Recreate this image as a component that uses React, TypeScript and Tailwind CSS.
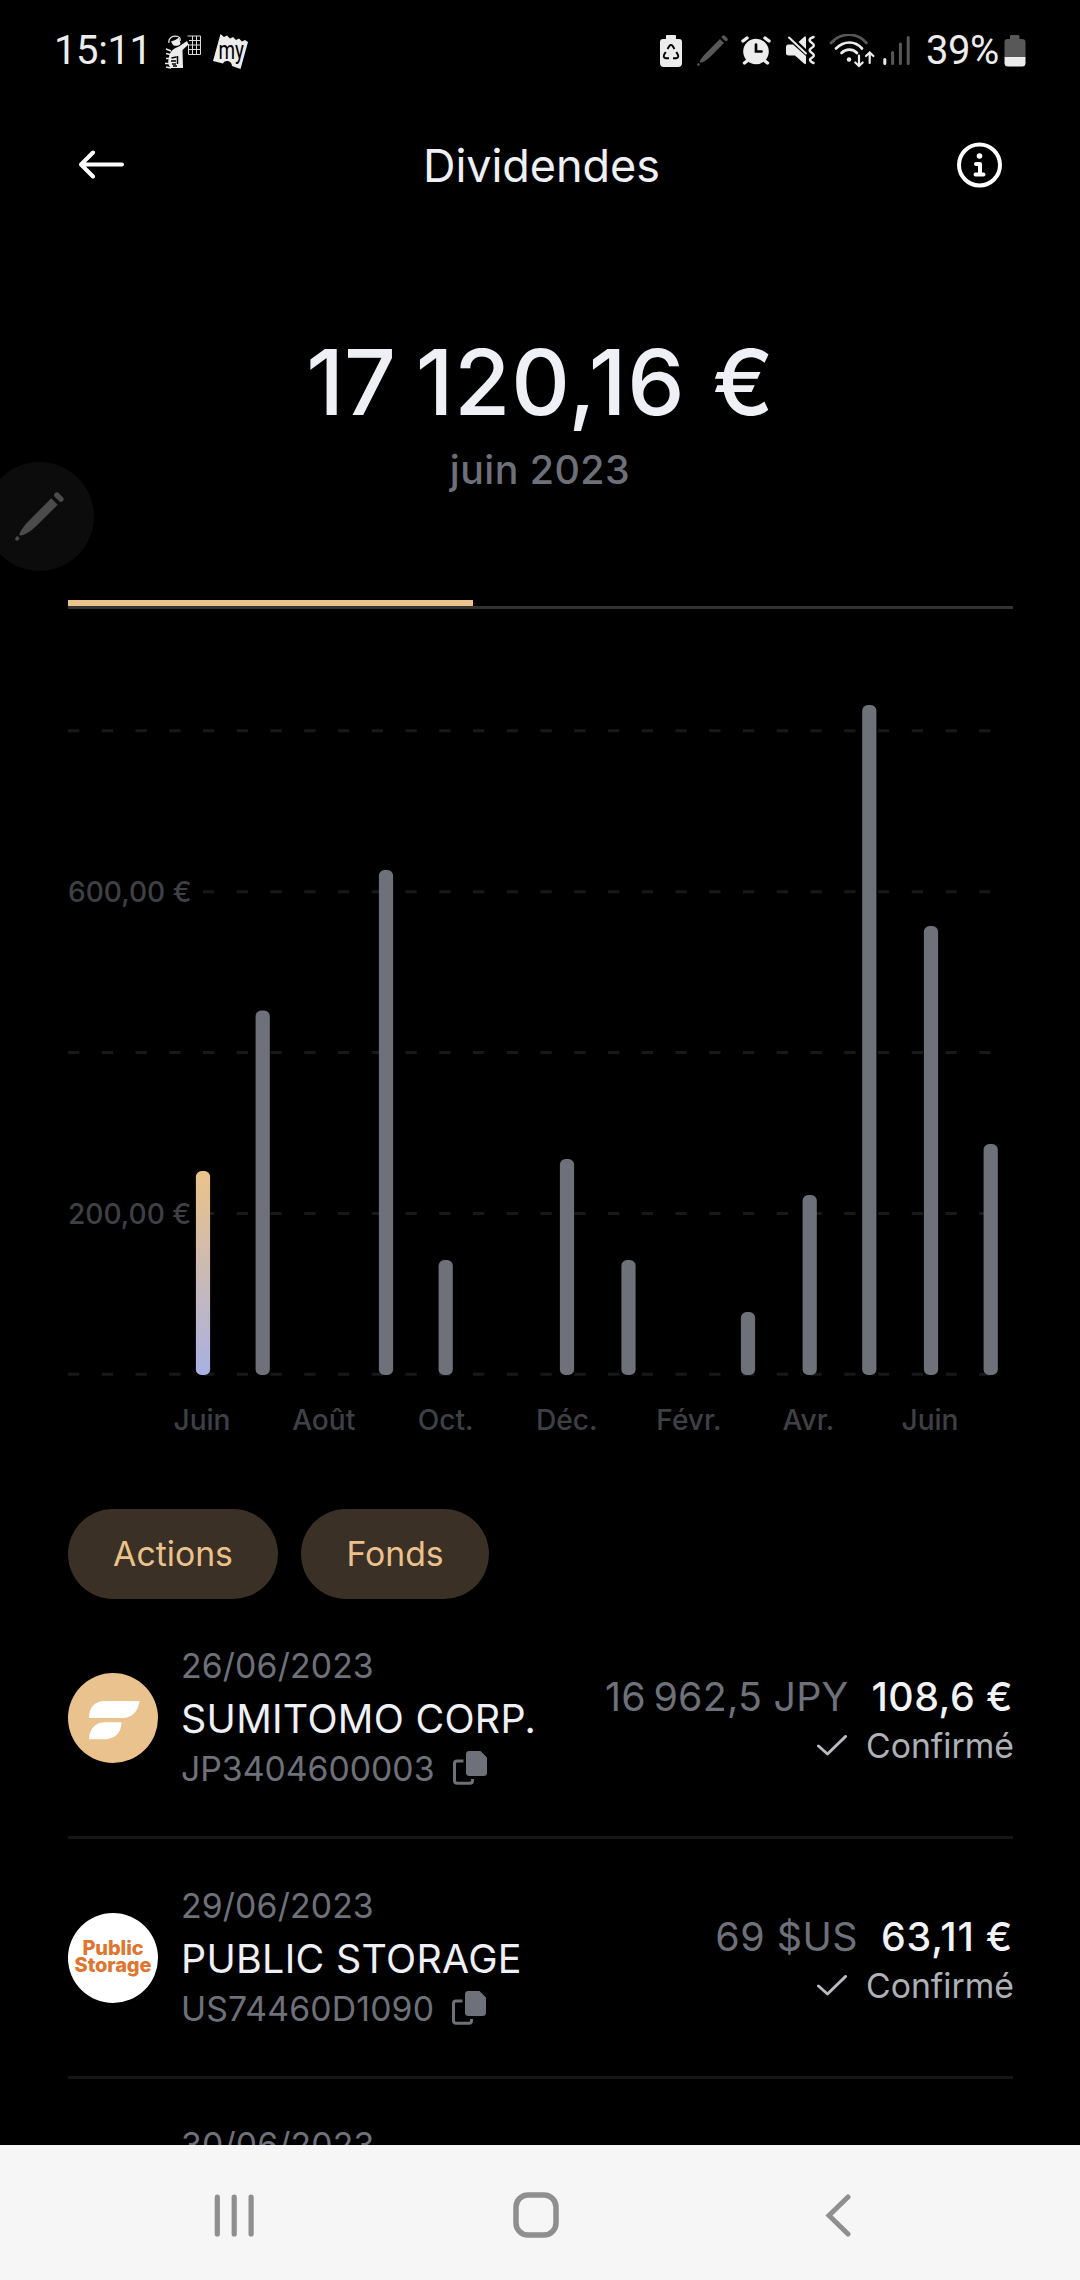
import type { ReactNode } from "react";

const BARS = [
  { x: 135, top: 468 },
  { x: 194.7, top: 307.6 },
  { x: 318, top: 167 },
  { x: 377.7, top: 557 },
  { x: 499, top: 456 },
  { x: 560.5, top: 557 },
  { x: 680, top: 609 },
  { x: 741.7, top: 492 },
  { x: 801.3, top: 2 },
  { x: 863, top: 223 },
  { x: 922.7, top: 441 },
];

const MONTHS = [
  { label: "Juin", x: 134 },
  { label: "Août", x: 255.7 },
  { label: "Oct.", x: 377.7 },
  { label: "Déc.", x: 498.7 },
  { label: "Févr.", x: 621 },
  { label: "Avr.", x: 740.5 },
  { label: "Juin", x: 862 },
];

const GRID = [27.7, 188.7, 349.5, 510.5, 671.3];

function Chart() {
  return (
    <svg width="945" height="740" viewBox="0 0 945 740" className="block overflow-visible font-['Inter',sans-serif]">
      <defs>
        <linearGradient id="current" x1="0" y1="0" x2="0" y2="1">
          <stop offset="0" stopColor="#ebc28a" />
          <stop offset="0.15" stopColor="#e2c095" />
          <stop offset="1" stopColor="#a8b1e3" />
        </linearGradient>
      </defs>
      {GRID.map((y) => (
        <line key={y} x1="0" x2="945" y1={y} y2={y} stroke="#17181a" strokeWidth="3" strokeDasharray="11.25 22.5" />
      ))}
      <rect x="0" y="170" width="124" height="36" fill="#000" />
      <rect x="0" y="492" width="124" height="36" fill="#000" />
      <text x="0" y="199" fontSize="28.1" fontWeight="500" fill="#3f4046">600,00 €</text>
      <text x="0" y="521" fontSize="28.1" fontWeight="500" fill="#3f4046">200,00 €</text>
      {BARS.map((b, i) => (
        <rect key={b.x} x={b.x - 7.1} y={b.top} width="14.2" height={672 - b.top} rx="5.6" fill={i === 0 ? "url(#current)" : "#6e7179"} />
      ))}
      {MONTHS.map((m) => (
        <text key={m.x} x={m.x} y="726.8" textAnchor="middle" fontSize="28.1" fontWeight="500" fill="#3f4046">
          {m.label}
        </text>
      ))}
    </svg>
  );
}

function Pen({ size, className }: { size: number; className: string }) {
  return (
    <svg width={size} height={size} viewBox="0 0 50 50" className={className} fill="currentColor">
      <path d="M37 6.5 L43.5 13 L22 34.5 C16 40.5 9 44.5 6 44.5 C4.500 44.500 4 43.500 5 41.500 C6.500 38 10 33.500 15 28.500 Z" />
      <path d="M40.5 1.500 C42 0 43.500 0 45 1.500 L48.800 5.300 C50 6.500 50 8 48.800 9.300 C47.500 10.500 46.300 10.500 45 9.300 L40.500 4.800 C39.500 3.700 39.500 2.500 40.500 1.500 Z" />
      <path d="M2.500 45 L4.800 47.300 L3.500 49 C2.500 50 1.500 50 .700 49.300 C0 48.500 0 47.500 .700 46.500 Z" />
    </svg>
  );
}

function StatusBar() {
  return (
    <div className="flex h-[100px] items-start pl-[54px] pr-[54px] pt-[26px] font-['Roboto',sans-serif] text-[40px] leading-[48px] text-[#ececec]">
      <span className="mt-px w-[111px] tracking-[-0.4px]">15:11</span>
      <svg width="36" height="34" viewBox="0 0 36 34" className="mt-[9px]">
        <path d="M4 8 C3 3 8 0 13 1.500 C15 2 15.500 4 15 6" fill="none" stroke="#ececec" strokeWidth="1.200" />
        <path d="M6 6.500 C9 5.500 13 4 14 2 L15.500 9 C14 11 10 11.500 8 10 Z" fill="#ececec" />
        <path d="M4 22 C5 16 9 13 14 11.500 L22 6 L23.500 9.500 L17.500 15 L18 33 H6 C2.500 30 3 26 4 22 Z" fill="#ececec" />
        <path d="M1 14 l5 2 M1 18.500 l4 1 M1 23.500 l3 0 M0 28.500 l4 0 M1 32 l5 1" stroke="#ececec" strokeWidth="1.500" />
        <path d="M6.500 23 l5 -1 M6 26 h5 M7 29 h4 M12.500 21 v8 M8 31 h4" stroke="#000" strokeWidth="1.500" />
        <path d="M22.500 1 H35.500 V19.500 H23.500 V9 M24 5.500 H35 M24 10 H35 M24 14.500 H35 M27.500 1 V20 M31.500 1 V20" fill="none" stroke="#d8d8d8" strokeWidth="1" />
      </svg>
      <svg width="36" height="36" viewBox="0 0 36 36" className="ml-[12px] mt-[8px]">
        <path d="M7.500 0 L11 3 L14 1.500 L17 4.500 L20 3 L23 6 L26 4.500 L29 7.500 L32 6 L35 8 L27.500 35 L19 32 C19 27 12 25 10 29.500 L0 27 Z" fill="#ececec" />
        <text x="5.500" y="24.500" fontSize="26" fontWeight="400" fill="#000" textLength="25.500" lengthAdjust="spacingAndGlyphs">my</text>
      </svg>
      <div className="grow" />
      <svg width="22" height="32" viewBox="0 0 22 32" className="mt-[9px]">
        <path d="M7 0 H15 Q16 0 16 1 V4 H19 Q22 4 22 7 V28 Q22 32 18 32 H4 Q0 32 0 28 V7 Q0 4 3 4 H6 V1 Q6 0 7 0 Z" fill="#ececec" />
        <path d="M7.500 14 L9.500 10.800 Q11 9 12.500 10.800 L14.500 14 M16.300 17 L18 20 Q19 23 16 23.300 H13 M9 23.300 H6 Q3 23 4 20 L5.700 17" fill="none" stroke="#000" strokeWidth="1.900" />
      </svg>
      <Pen size={31} className="ml-[15px] mt-[9px] text-[#585858]" />
      <svg width="30" height="30" viewBox="0 0 30 30" className="ml-[13px] mt-[10px]">
        <circle cx="15" cy="15.500" r="12.800" fill="#ececec" />
        <path d="M2 5 L6 2 M24 2 L28 5 M6 25 L3.500 27 M24 25 L26.500 27" stroke="#ececec" strokeWidth="3.400" strokeLinecap="round" />
        <path d="M15 8.500 V15.500 H20.500" fill="none" stroke="#000" strokeWidth="2.700" strokeLinecap="round" />
      </svg>
      <svg width="30" height="30" viewBox="0 0 30 30" className="ml-[15px] mt-[9px]">
        <path d="M2 9.500 H7 L20 21 V28 Q20 30 18 28.500 L9 20.500 H3 Q0 20.500 0 18 V12 Q0 9.500 2 9.500 Z M12.500 7 L18 2 Q20 0 20 3 V14 Z" fill="#ececec" />
        <path d="M3 2.500 L20 18.500" stroke="#ececec" strokeWidth="2" strokeLinecap="round" />
        <path d="M27.500 2 C22 4 23 6 26 8 C29 10 28 11.500 25.500 13 C22.500 14.800 23.500 16 26 18 C29 20 28 21.500 25.500 23 C23 24.500 24 26.500 27.500 28" fill="none" stroke="#ececec" strokeWidth="2.500" strokeLinecap="round" />
      </svg>
      <svg width="46" height="36" viewBox="0 0 46 36" className="ml-[13px] mt-[8px]" fill="none" strokeLinecap="round">
        <path d="M2 9 C12 -2 28 -2 37.500 9" stroke="#585858" strokeWidth="2.700" />
        <path d="M7 14.500 C15 6.500 26 6.500 33 14.500 M12.500 19 C17 14.500 24 14.500 28 19" stroke="#ececec" strokeWidth="2.700" />
        <circle cx="20" cy="25.500" r="2.200" fill="#ececec" />
        <path d="M30 21.500 V31.500 M26.300 28.500 L30 32 L33.700 28.500 M40.700 29 V19 M37 22 L40.700 18.500 L44.400 22" stroke="#ececec" strokeWidth="2.200" />
      </svg>
      <svg width="27" height="30" viewBox="0 0 27 30" className="ml-[8px] mt-[9px]" strokeWidth="3" strokeLinecap="round">
        <path d="M1.800 24.500 V28.500" stroke="#ececec" />
        <path d="M9.600 17.500 V28.500 M17.400 9 V28.500 M25.200 2.500 V28.500" stroke="#585858" />
      </svg>
      <span className="ml-[15px] mt-px w-[74px] whitespace-nowrap text-right tracking-[-0.4px]">39%</span>
      <svg width="22" height="32" viewBox="0 0 22 32" className="ml-[5px] mt-[9px]">
        <path d="M7 0 H14 Q15.500 0 15.500 1.500 V4 H18 Q21.500 4 21.500 7 V22 H.500 V7 Q.500 4 3.500 4 H6 V1.500 Q6 0 7 0 Z" fill="#585858" />
        <path d="M.500 22 H21.500 V28 Q21.500 31.500 18 31.500 H4 Q.500 31.500 .500 28 Z" fill="#ececec" />
      </svg>
    </div>
  );
}

function CopyIcon() {
  return (
    <svg width="34" height="34" viewBox="0 0 34 34" className="ml-[18px]">
      <path d="M16 0 H27.500 L34 6.500 V21.500 Q34 25 30.500 25 H16.500 Q13 25 13 21.500 V3.500 Q13 0 16 0 Z" fill="#6e7179" />
      <path d="M10.500 10 H4 Q1.500 10 1.500 12.500 V29.500 Q1.500 32.300 4.300 32.300 H17 Q19.500 32.300 19.500 29.500 V28" fill="none" stroke="#6e7179" strokeWidth="3" />
    </svg>
  );
}

function FinaryLogo() {
  return (
    <svg width="90" height="90" viewBox="0 0 90 90">
      <circle cx="45" cy="45" r="45" fill="#e9c28d" />
      <path d="M21 45 C21 35 26 28 37 28 H71.500 C70.500 38 64 45 54.500 45 Z M21 66.300 C21.500 56 27 49.300 37 49.300 H53.500 C53.500 60 46.500 66.300 36.500 66.300 Z" fill="#fff" />
    </svg>
  );
}

function PublicStorageLogo() {
  return (
    <div className="flex h-[90px] w-[90px] flex-col items-center rounded-full bg-white pt-[27px] text-[20px] font-extrabold leading-[17px] text-[#e0752f]">
      <span className="tracking-[-0.1px]">Public</span>
      <span className="tracking-[-0.1px]">Storage</span>
    </div>
  );
}

type RowProps = {
  logo: ReactNode;
  date: string;
  name: string;
  isin: string;
  isinClass: string;
  foreign: string;
  foreignClass: string;
  amount: string;
  amountClass: string;
};

function Row({ logo, date, name, isin, isinClass, foreign, foreignClass, amount, amountClass }: RowProps) {
  return (
    <div className="flex h-[240px] shrink-0 items-center border-b-[3px] border-[#151517]">
      {logo}
      <div className="ml-[23px] flex flex-col whitespace-nowrap pb-[5px] text-[33.75px] text-[#6e7179]">
        <span className="h-[48px] leading-[48px] tracking-[0.15px]">{date}</span>
        <span className="h-[58px] text-[39.375px] leading-[58px] tracking-[0.3px] text-[#eef0f5]">{name}</span>
        <span className="flex h-[41px] items-center leading-[41px]">
          <span className={isinClass}>{isin}</span>
          <CopyIcon />
        </span>
      </div>
      <div className="ml-auto flex flex-col items-end whitespace-nowrap pt-[2px]">
        <div className="flex h-[54px] text-[39.375px] leading-[54px]">
          <span className={`mr-[23px] text-[#6e7179] ${foreignClass}`}>{foreign}</span>
          <span className={`font-medium text-[#f2f3f7] ${amountClass}`}>{amount}</span>
        </div>
        <div className="-mr-px flex h-[44px] items-center text-[33.75px] leading-[44px] text-[#aeb0b6]">
          <svg width="30" height="21" viewBox="0 0 30 21" className="mr-[19px]" fill="none" stroke="#b9bbc0" strokeWidth="3" strokeLinecap="round" strokeLinejoin="round">
            <path d="M1.500 11 L10.500 19 L28.500 1.500" />
          </svg>
          <span>Confirmé</span>
        </div>
      </div>
    </div>
  );
}

export default function App() {
  return (
    <div className="relative flex h-[2280px] w-[1080px] flex-col overflow-hidden bg-black font-['Inter',sans-serif]">
      <StatusBar />
      <header className="flex h-[130px] items-center justify-between px-[78px]">
        <svg width="46" height="30" viewBox="0 0 46 30" fill="none" stroke="#fff" strokeWidth="4" strokeLinecap="round" strokeLinejoin="round">
          <path d="M15 2.500 L3 14.500 L15 26.500 M3 14.500 H44" />
        </svg>
        <h1 className="pl-[3px] pt-[2px] text-[45px] leading-[56px] tracking-[-0.05px] text-[#eef0f5]">Dividendes</h1>
        <svg width="46" height="46" viewBox="0 0 46 46" fill="none" stroke="#fff">
          <circle cx="23.500" cy="23" r="20.500" strokeWidth="4" />
          <circle cx="23.500" cy="14" r="2.800" fill="#fff" stroke="none" />
          <path d="M20 22 H24 V32.500 M19.500 32.500 H27.500" strokeWidth="4" strokeLinecap="round" strokeLinejoin="round" />
        </svg>
      </header>
      <section className="flex h-[370px] flex-col items-center pt-[97px]">
        <div className="flex h-[110px] whitespace-nowrap text-[91px] font-medium leading-[110px] text-[#eef0f5]">
          <span className="mr-[4px] tracking-[0.8px]">{"17\u202f"}</span>
          <span className="mr-[3px] tracking-[0.8px]">120,16</span>
          <span>{"\u00a0€"}</span>
        </div>
        <div className="mt-[9px] text-[39.375px] font-medium leading-[48px] tracking-[0.45px] text-[#6e7079]">juin 2023</div>
      </section>
      <div className="ml-[68px] mr-[67px] flex h-[9px] shrink-0 flex-col">
        <div className="h-[6px] w-[405px] bg-[#ebc28c]" />
        <div className="h-[3px] bg-[#333336]" />
      </div>
      <div className="h-[900px] shrink-0 px-[68px] pt-[94px]">
        <Chart />
      </div>
      <div className="flex h-[90px] shrink-0 gap-[23px] px-[68px] text-[33.75px] leading-[90px] text-[#ebc28c]">
        <button className="w-[210px] rounded-full bg-[#3b3025] text-center">Actions</button>
        <button className="w-[188px] rounded-full bg-[#3b3025] text-center">Fonds</button>
      </div>
      <main className="flex h-[546px] shrink-0 flex-col overflow-hidden pl-[68px] pr-[67px]">
        <Row
          logo={<FinaryLogo />}
          date="26/06/2023"
          name="SUMITOMO CORP."
          isin="JP3404600003"
          isinClass="tracking-normal"
          foreign={"16\u202f962,5\u00a0JPY"}
          foreignClass="tracking-[0.25px]"
          amount={"108,6\u00a0€"}
          amountClass="tracking-[0.45px]"
        />
        <Row
          logo={<PublicStorageLogo />}
          date="29/06/2023"
          name="PUBLIC STORAGE"
          isin="US74460D1090"
          isinClass="tracking-[0.15px]"
          foreign={"69\u00a0$US"}
          foreignClass="tracking-[0.5px]"
          amount={"63,11\u00a0€"}
          amountClass="tracking-[0.75px]"
        />
        <div className="ml-[113px] pt-[42px] text-[33.75px] leading-[48px] tracking-[0.15px] text-[#6e7179]">30/06/2023</div>
      </main>
      <nav className="flex h-[135px] shrink-0 items-center bg-[#f6f6f6] pt-[5px]">
        <svg width="40" height="43" viewBox="0 0 40 43" className="ml-[214px]" stroke="#8f8f8f" strokeWidth="5.200" strokeLinecap="round">
          <path d="M3.300 3 V40 M20.200 3 V40 M37.100 3 V40" />
        </svg>
        <svg width="46" height="46" viewBox="0 0 46 46" className="ml-[259px]" fill="none" stroke="#8f8f8f" strokeWidth="5.500">
          <rect x="3" y="3" width="40" height="40" rx="12" />
        </svg>
        <svg width="26" height="43" viewBox="0 0 26 43" className="ml-[266px]" fill="none" stroke="#8f8f8f" strokeWidth="5" strokeLinecap="round">
          <path d="M23 3 L4 21.500 L23 40" />
        </svg>
      </nav>
      <div className="absolute -left-[15px] top-[462px] flex h-[109px] w-[109px] items-center justify-center rounded-full bg-[#0c0c0c]">
        <Pen size={49} className="text-[#4b4b4b]" />
      </div>
    </div>
  );
}
